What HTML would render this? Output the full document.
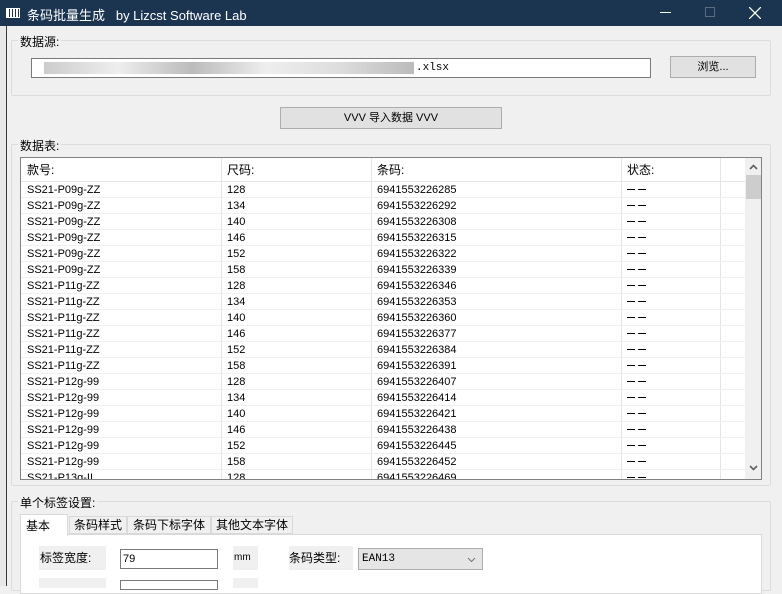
<!DOCTYPE html>
<html><head><meta charset="utf-8"><style>
*{box-sizing:border-box;margin:0;padding:0}
body{width:782px;height:586px;overflow:hidden;background:#f0f0f0;font-family:"Liberation Sans","Noto Sans CJK SC",sans-serif;font-size:12px;color:#000;position:relative}
.a{position:absolute}
.title{left:0;top:0;width:782px;height:26px;background:#1b3450;color:#fff;font-size:13px}
.grp{border:1px solid #dcdcdc;border-radius:2px}
.lbl{background:#f0f0f0;padding:0 2px;font-size:12px}
.btn{background:#e1e1e1;border:1px solid #adadad;text-align:center;font-size:11px}
.row{position:absolute;left:0;height:16px;width:724px;border-bottom:1px solid #f0f0f0;font-size:11px;line-height:16px}
.row span{position:absolute}
</style></head><body>
<div class="a" style="left:0;top:26px;width:6px;height:560px;background:#e8e8e8"></div>
<div class="a" style="left:6px;top:26px;width:1px;height:560px;background:#3a3a3a"></div>
<div class="a title">
 <div class="a" style="left:6px;top:8px;width:14px;height:10px;border:1px solid #fff;background:repeating-linear-gradient(90deg,#fff 0 2px,#1b3450 2px 3px)"></div>
 <div class="a" style="left:27px;top:5px">条码批量生成 &nbsp;&nbsp;by Lizcst Software Lab</div>
 <div class="a" style="left:660px;top:12px;width:11px;height:1px;background:#fff"></div>
 <div class="a" style="left:705px;top:7px;width:10px;height:10px;border:1px solid #5a6a80"></div>
 <svg class="a" style="left:749px;top:7px" width="12" height="12"><path d="M0 0L12 12M12 0L0 12" stroke="#fff" stroke-width="1.3"/></svg>
</div>
<div class="a grp" style="left:11px;top:40px;width:760px;height:56px"></div>
<div class="a lbl" style="left:18px;top:33px">数据源:</div>
<div class="a" style="left:31px;top:58px;width:620px;height:20px;background:#fff;border:1px solid #7a7a7a;font-size:11px;line-height:18px;padding-left:2px">
 <div class="a" style="left:12px;top:3px;width:370px;height:12px;background:linear-gradient(90deg,#ccc,#eee 20%,#bbb 40%,#eee 60%,#ddd 80%,#bbb)"></div>
 <span class="a" style="left:384px;font-family:'Liberation Mono',monospace">.xlsx</span>
</div>
<div class="a btn" style="left:670px;top:56px;width:86px;height:22px;line-height:20px">浏览...</div>
<div class="a btn" style="left:280px;top:107px;width:222px;height:22px;line-height:20px">VVV 导入数据 VVV</div>
<div class="a grp" style="left:11px;top:144px;width:760px;height:342px"></div>
<div class="a lbl" style="left:18px;top:137px">数据表:</div>
<div class="a" style="left:20px;top:157px;width:742px;height:323px;background:#fff;border:1px solid #828282;overflow:hidden">
 <div class="a" style="left:0;top:0;width:724px;height:24px;border-bottom:1px solid #e5e5e5;font-size:12px;line-height:24px">
  <span class="a" style="left:6px">款号:</span><span class="a" style="left:206px">尺码:</span><span class="a" style="left:356px">条码:</span><span class="a" style="left:606px">状态:</span>
 </div>
 <div class="a" style="left:200px;top:0;width:1px;height:323px;background:#e5e5e5"></div>
 <div class="a" style="left:350px;top:0;width:1px;height:323px;background:#e5e5e5"></div>
 <div class="a" style="left:600px;top:0;width:1px;height:323px;background:#e5e5e5"></div>
 <div class="a" style="left:699px;top:0;width:1px;height:323px;background:#e5e5e5"></div>
 <div id="rows"></div>
 <div class="a" style="left:724px;top:0;width:17px;height:321px;background:#f0f0f0">
  <svg class="a" style="left:4px;top:6px" width="9" height="6"><path d="M1 5L4.5 1.5L8 5" stroke="#606060" stroke-width="1.6" fill="none"/></svg>
  <div class="a" style="left:1px;top:17px;width:15px;height:24px;background:#cdcdcd"></div>
  <svg class="a" style="left:4px;top:307px" width="9" height="6"><path d="M1 1L4.5 4.5L8 1" stroke="#606060" stroke-width="1.6" fill="none"/></svg>
 </div>
</div>
<div class="a grp" style="left:11px;top:501px;width:760px;height:90px"></div>
<div class="a lbl" style="left:18px;top:494px">单个标签设置:</div>
<div class="a" style="left:20px;top:534px;width:742px;height:60px;background:#fff;border:1px solid #d9d9d9"></div>
<div class="a" style="left:20px;top:514px;width:48px;height:22px;background:#fff;border:1px solid #d9d9d9;border-bottom:none;padding:2px 0 0 5px">基本</div>
<div class="a" style="left:69px;top:516px;width:58px;height:18px;background:#f0f0f0;border:1px solid #d9d9d9;line-height:16px;text-align:center">条码样式</div>
<div class="a" style="left:127px;top:516px;width:84px;height:18px;background:#f0f0f0;border:1px solid #d9d9d9;line-height:16px;text-align:center">条码下标字体</div>
<div class="a" style="left:211px;top:516px;width:82px;height:18px;background:#f0f0f0;border:1px solid #d9d9d9;line-height:16px;text-align:center">其他文本字体</div>
<div class="a" style="left:39px;top:546px;width:67px;height:24px;background:#f0f0f0;line-height:24px;padding-left:1px">标签宽度:</div>
<div class="a" style="left:120px;top:549px;width:98px;height:20px;border:1px solid #7a7a7a;background:#fff;font-size:11px;line-height:18px;padding-left:2px">79</div>
<div class="a" style="left:233px;top:546px;width:25px;height:24px;background:#f0f0f0;line-height:24px;font-size:10px;padding-left:1px">mm</div>
<div class="a" style="left:289px;top:546px;width:64px;height:24px;background:#f0f0f0;line-height:24px">条码类型:</div>
<div class="a" style="left:358px;top:548px;width:125px;height:22px;border:1px solid #adadad;background:#e5e5e5;font-size:11px;line-height:20px;padding-left:3px;font-family:'Liberation Mono',monospace">EAN13<svg class="a" style="right:6px;top:8px" width="9" height="6"><path d="M1 1L4.5 4.5L8 1" stroke="#777" stroke-width="1" fill="none"/></svg></div>
<div class="a" style="left:39px;top:578px;width:67px;height:10px;background:#f0f0f0"></div>
<div class="a" style="left:120px;top:580px;width:98px;height:10px;border:1px solid #7a7a7a;background:#fff"></div>
<div class="a" style="left:233px;top:578px;width:25px;height:10px;background:#f0f0f0"></div>
<script>
var d=[["P09","ZZ",128,"285"],["P09","ZZ",134,"292"],["P09","ZZ",140,"308"],["P09","ZZ",146,"315"],["P09","ZZ",152,"322"],["P09","ZZ",158,"339"],["P11","ZZ",128,"346"],["P11","ZZ",134,"353"],["P11","ZZ",140,"360"],["P11","ZZ",146,"377"],["P11","ZZ",152,"384"],["P11","ZZ",158,"391"],["P12","99",128,"407"],["P12","99",134,"414"],["P12","99",140,"421"],["P12","99",146,"438"],["P12","99",152,"445"],["P12","99",158,"452"],["P13","II",128,"469"]];
var h="";d.forEach(function(r,i){h+='<div class="row" style="top:'+(24+i*16)+'px"><span style="left:6px">SS21-'+r[0]+'g-'+r[1]+'</span><span style="left:206px">'+r[2]+'</span><span style="left:356px">6941553226'+r[3]+'</span><span style="left:606px;top:7px;width:8px;height:1px;background:#000"></span><span style="left:617px;top:7px;width:8px;height:1px;background:#000"></span></div>'});
document.getElementById("rows").innerHTML=h;
</script>
</body></html>
